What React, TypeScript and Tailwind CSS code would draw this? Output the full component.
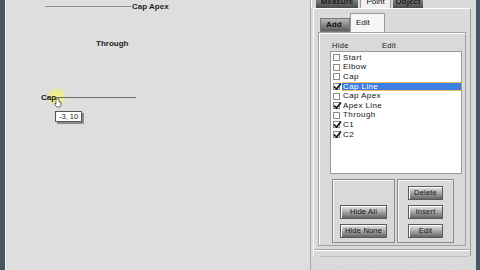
import React from "react";

const items = [
  { label: "Start", checked: false },
  { label: "Elbow", checked: false },
  { label: "Cap", checked: false },
  { label: "Cap Line", checked: true, selected: true },
  { label: "Cap Apex", checked: false },
  { label: "Apex Line", checked: true },
  { label: "Through", checked: false },
  { label: "C1", checked: true },
  { label: "C2", checked: true },
];

function Check({ checked }: { checked: boolean }) {
  return (
    <span className="relative inline-block w-[7px] h-[7px] border border-[#8a8a8a] bg-white shrink-0">
      {checked && (
        <svg className="absolute -left-[1px] -top-[2px]" width="9" height="9" viewBox="0 0 9 9">
          <path d="M1 4.5 L3.5 7 L8 1.5" stroke="#111" strokeWidth="1.6" fill="none" />
        </svg>
      )}
    </span>
  );
}

function Btn({ label, w }: { label: string; w: string }) {
  return (
    <div
      className={`${w} h-[14px] flex items-center justify-center border border-[#5a5a5a] bg-gradient-to-b from-[#e8e8e8] via-[#a8a8a8] to-[#646464] text-[7.5px] text-[#111] leading-none tracking-[0.2px] shadow-[1px_1px_0_#ffffff_inset]`}
    >
      {label}
    </div>
  );
}

export default function App() {
  return (
    <div
      className="w-[480px] h-[270px] flex bg-[#dddddd] overflow-hidden"
      style={{ fontFamily: '"Liberation Sans", Arial, sans-serif' }}
    >
      {/* left window edge */}
      <div className="w-[5px] h-full bg-[#4b5665]" />
      <div className="w-px h-full bg-[#f2f2f2]" />

      {/* drawing canvas */}
      <div className="relative flex-1 h-full bg-[#dedede]">
        <div className="absolute left-[39px] top-[6px] w-[86px] h-px bg-[#8c8c8c]" />
        <div className="absolute left-[126px] top-[1px] text-[8px] font-bold text-[#222]">Cap Apex</div>
        <div className="absolute left-[90px] top-[38px] text-[8px] font-bold text-[#222]">Through</div>

        <div className="absolute left-[43px] top-[89px] w-[16px] h-[16px] rounded-full bg-[#f4f27a] opacity-80 blur-[1px]" />
        <div className="absolute left-[35px] top-[92px] text-[8px] font-bold text-[#111]">Cap</div>
        <div className="absolute left-[50px] top-[97px] w-[80px] h-px bg-[#6a6a6a]" />
        <svg className="absolute left-[48px] top-[98px]" width="8" height="10" viewBox="0 0 8 10">
          <path d="M2 1 V6 L1 5 L1 7 L3 9 H6 L7 7 V4 H5 V1 Z" fill="#fff" stroke="#333" strokeWidth="0.7" />
        </svg>
        <div className="absolute left-[49px] top-[111px] px-[3px] h-[11px] flex items-center border border-[#555] bg-white text-[7.5px] text-[#222] shadow-[2px_2px_0_#8a8a8a]">
          -3, 10
        </div>
      </div>

      {/* right control panel */}
      <div className="w-[166px] h-full flex flex-col bg-[#dadada] border-l border-[#a8a8a8]">
        <div className="flex h-[8px] items-end pl-[4px] gap-[2px] border-l border-white">
          <div className="w-[42px] h-[12px] flex items-end justify-center pb-[2px] bg-gradient-to-b from-[#9a9a9a] to-[#4a4a4a] text-[8px] font-bold text-[#1a1a1a] leading-none">
            Measure
          </div>
          <div className="w-[31px] h-[12px] flex items-end justify-center pb-[2px] bg-[#f0f0f0] border-x border-[#999] text-[8px] text-[#111] leading-none">
            Point
          </div>
          <div className="w-[30px] h-[12px] flex items-end justify-center pb-[2px] bg-gradient-to-b from-[#9a9a9a] to-[#4a4a4a] text-[8px] font-bold text-[#1a1a1a] leading-none">
            Object
          </div>
        </div>

        <div className="flex-1 flex flex-col ml-[2px] mr-[5px] pt-[2px] border-l border-t border-r border-white border-r-[#9c9c9c]">
          <div className="flex items-end h-[21px] pl-[6px]">
            <div className="w-[30px] h-[14px] flex items-center pl-[5px] bg-gradient-to-b from-[#b8b8b8] via-[#8a8a8a] to-[#5c5c5c] border border-[#777] text-[8px] font-bold text-[#111]">
              Add
            </div>
            <div className="w-[35px] h-[19px] flex items-center pl-[5px] bg-[#f6f6f6] border border-b-0 border-[#999] text-[8px] text-[#111]">
              Edit
            </div>
          </div>

          <div className="flex flex-col mx-[4px] h-[214px] border border-[#a0a0a0] bg-[#d9d9d9] shadow-[1px_1px_0_#ffffff_inset]">
            <div className="flex h-[18px] items-end pb-[2px] pl-[13px] text-[7.5px] text-[#222] leading-none tracking-[0.3px]">
              <span className="w-[50px]">Hide</span>
              <span>Edit</span>
            </div>
            <div className="ml-[11px] mr-[3px] h-[123px] bg-white border border-[#9a9a9a] pt-[1px] flex flex-col">
              {items.map((it) => (
                <div
                  key={it.label}
                  className="flex items-center h-[9.6px] pl-[2px] gap-[2px] text-[8px] leading-none tracking-[0.4px] text-[#111]"
                >
                  <Check checked={it.checked} />
                  <span
                    className={
                      it.selected
                        ? "flex-1 h-full flex items-center pl-[1px] bg-[#3d7ee0] text-white border-y border-[#f0c060]"
                        : "pl-[1px]"
                    }
                  >
                    {it.label}
                  </span>
                </div>
              ))}
            </div>

            <div className="flex ml-[13px] mt-[5px] gap-[2px]">
              <div className="w-[63px] h-[64px] border border-[#8a8a8a] shadow-[1px_1px_0_#f4f4f4_inset] flex flex-col items-center justify-end gap-[5px] pb-[4px]">
                <Btn label="Hide All" w="w-[47px]" />
                <Btn label="Hide None" w="w-[47px]" />
              </div>
              <div className="w-[57px] h-[64px] border border-[#8a8a8a] shadow-[1px_1px_0_#f4f4f4_inset] flex flex-col items-center justify-end gap-[5px] pb-[4px]">
                <Btn label="Delete" w="w-[35px]" />
                <Btn label="Insert" w="w-[35px]" />
                <Btn label="Edit" w="w-[35px]" />
              </div>
            </div>
          </div>
          <div className="mt-[3px] h-px bg-[#a8a8a8]" />
          <div className="h-px bg-white" />
        </div>

        <div className="h-[14px] mx-[8px] border-t border-[#bcbcbc] flex items-end justify-around pb-[1px] text-[6px] text-[#9a9a9a] leading-none">
          <span>· ·</span>
          <span>· ·</span>
          <span>· ·</span>
          <span>·</span>
        </div>
      </div>

      {/* right window edge */}
      <div className="w-[4px] h-full bg-[#4b5665]" />
    </div>
  );
}
